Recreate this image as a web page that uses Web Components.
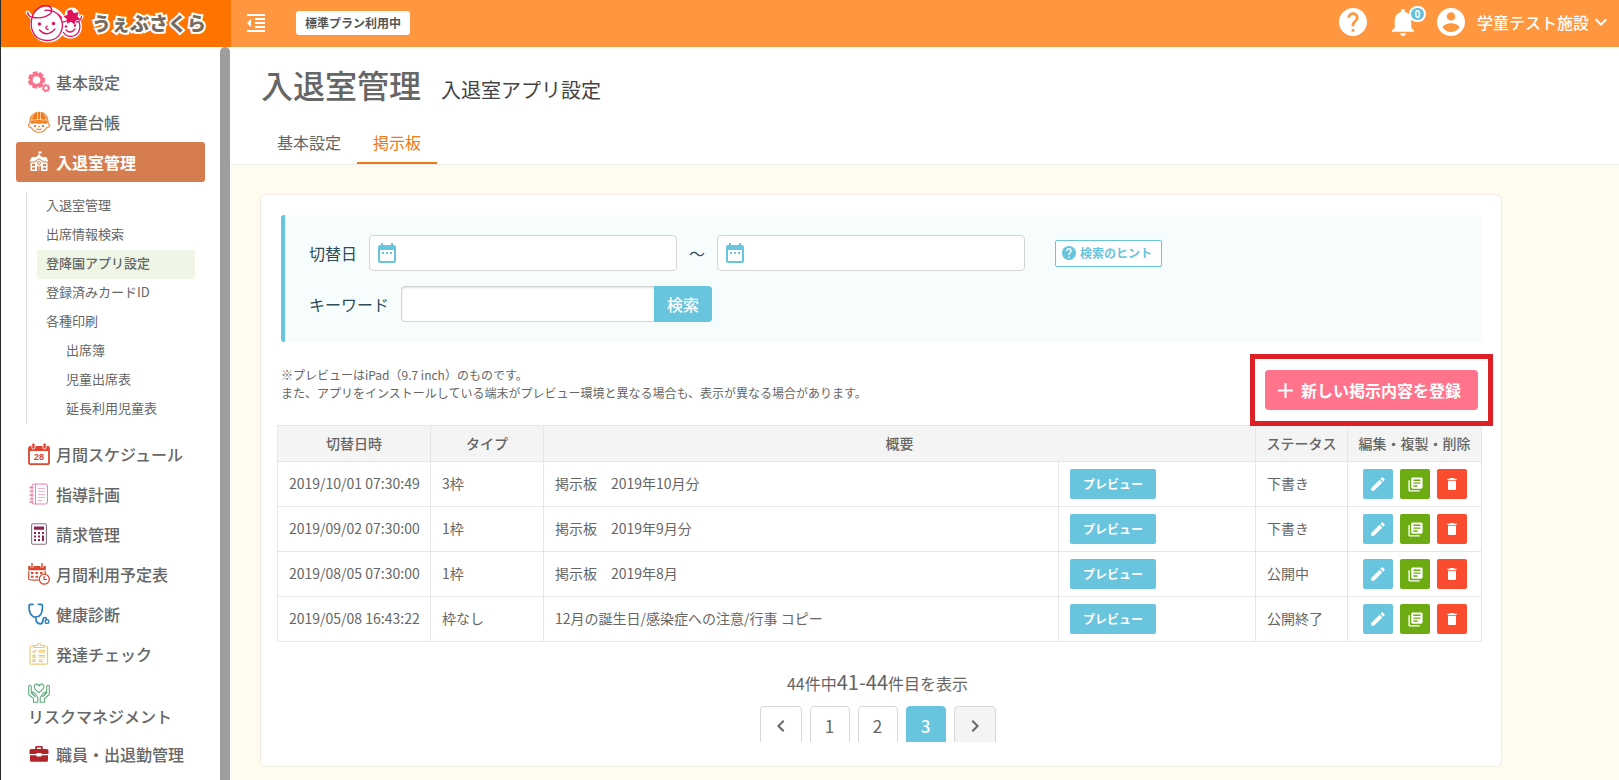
<!DOCTYPE html>
<html lang="ja">
<head>
<meta charset="utf-8">
<title>入退室管理 - うぇぶさくら</title>
<style>
  html, body { margin: 0; height: 100%; }
  body {
    font-family: "Noto Sans CJK JP", "Noto Sans", sans-serif;
    font-size: 14px; color: #666; background: #fffbee; overflow: hidden;
    --blue: #69c4de; --line: #e6e6e6; --orange: #f07818;
  }
</style>
</head>
<body>
<app-shell>
  <app-header slot="header"></app-header>
  <side-nav slot="nav">
    <nav-item icon="gear">基本設定</nav-item>
    <nav-item icon="child">児童台帳</nav-item>
    <nav-item icon="school" active>入退室管理</nav-item>
    <sub-menu>
      <sub-item>入退室管理</sub-item>
      <sub-item>出席情報検索</sub-item>
      <sub-item active>登降園アプリ設定</sub-item>
      <sub-item>登録済みカードID</sub-item>
      <sub-item>各種印刷</sub-item>
      <sub-item nested>出席簿</sub-item>
      <sub-item nested>児童出席表</sub-item>
      <sub-item nested>延長利用児童表</sub-item>
    </sub-menu>
    <nav-item icon="calendar">月間スケジュール</nav-item>
    <nav-item icon="notebook">指導計画</nav-item>
    <nav-item icon="calculator">請求管理</nav-item>
    <nav-item icon="schedule">月間利用予定表</nav-item>
    <nav-item icon="stethoscope">健康診断</nav-item>
    <nav-item icon="checklist">発達チェック</nav-item>
    <nav-item icon="hands" stacked>リスクマネジメント</nav-item>
    <nav-item icon="briefcase">職員・出退勤管理</nav-item>
  </side-nav>
  <page-header></page-header>
  <content-card>
    <search-panel></search-panel>
    <notice-bar></notice-bar>
    <notice-table></notice-table>
    <page-nav></page-nav>
  </content-card>
</app-shell>

<script>
const svg = (box, w, h, body) =>
  `<svg viewBox="${box}" width="${w}" height="${h}" aria-hidden="true">${body}</svg>`;
const glyph = (d, size = 24, box = '0 0 24 24', h = size) =>
  svg(box, size, h, `<path fill="currentColor" d="${d}"/>`);

const HELP = 'M12 2C6.48 2 2 6.48 2 12s4.48 10 10 10 10-4.48 10-10S17.52 2 12 2zm1 17h-2v-2h2v2zm2.07-7.75l-.9.92C13.45 12.9 13 13.5 13 15h-2v-.5c0-1.1.45-2.1 1.17-2.83l1.24-1.26c.37-.36.59-.86.59-1.41 0-1.1-.9-2-2-2s-2 .9-2 2H8c0-2.21 1.79-4 4-4s4 1.79 4 4c0 .88-.36 1.68-.93 2.25z';

const gearPath = (cx, cy, r, r2) => {
  let d = '';
  for (let i = 0; i < 7; i++) {
    [[-.38, r], [-.26, r2], [.26, r2], [.38, r]].forEach(([o, rad], k) => {
      const a = i * 2 * Math.PI / 7 + o - .2;
      d += (i + k ? 'L' : 'M') + (cx + rad * Math.sin(a)).toFixed(2) + ' ' + (cy - rad * Math.cos(a)).toFixed(2);
    });
  }
  return d + 'z';
};

const ICONS = {
  indent: glyph('M11 17h10v-2H11v2zm-8-5l4 4V8l-4 4zm0 9h18v-2H3v2zM3 3v2h18V3H3zm8 6h10V7H11v2zm0 4h10v-2H11v2z', 18, '3 3 18 18'),
  help: glyph(HELP, 28, '2 2 20 20'),
  hint: glyph(HELP, 14, '2 2 20 20'),
  bell: glyph('M12 22c1.1 0 2-.9 2-2h-4c0 1.1.89 2 2 2zm6-6v-5c0-3.07-1.64-5.64-4.5-6.32V4c0-.83-.67-1.5-1.5-1.5s-1.5.67-1.5 1.5v.68C7.63 5.36 6 7.92 6 11v5l-2 2v1h16v-1l-2-2z', 22, '4 2.5 16 19.5', 27),
  account: glyph('M12 2C6.48 2 2 6.48 2 12s4.48 10 10 10 10-4.48 10-10S17.52 2 12 2zm0 3c1.66 0 3 1.34 3 3s-1.34 3-3 3-3-1.34-3-3 1.34-3 3-3zm0 14.2c-2.5 0-4.71-1.28-6-3.22.03-1.99 4-3.08 6-3.08 1.99 0 5.97 1.09 6 3.08-1.29 1.94-3.5 3.22-6 3.22z', 28, '2 2 20 20'),
  down: glyph('M16.59 8.59L12 13.17 7.41 8.59 6 10l6 6 6-6z', 12, '6 6 12 12'),
  date: glyph('M9 11H7v2h2v-2zm4 0h-2v2h2v-2zm4 0h-2v2h2v-2zm2-7h-1V2h-2v2H8V2H6v2H5c-1.11 0-1.99.9-1.99 2L3 20c0 1.1.89 2 2 2h14c1.1 0 2-.9 2-2V6c0-1.1-.9-2-2-2zm0 16H5V9h14v11z'),
  edit: glyph('M3 17.25V21h3.75L17.81 9.94l-3.75-3.75L3 17.25zM20.71 7.04c.39-.39.39-1.02 0-1.41l-2.34-2.34c-.39-.39-1.02-.39-1.41 0l-1.83 1.83 3.75 3.75 1.83-1.83z', 18),
  copy: glyph('M4 6H2v14c0 1.1.9 2 2 2h14v-2H4V6zm16-4H8c-1.1 0-2 .9-2 2v12c0 1.1.9 2 2 2h12c1.1 0 2-.9 2-2V4c0-1.1-.9-2-2-2zm-1 9H9V9h10v2zm-4 4H9v-2h6v2zm4-8H9V5h10v2z', 17),
  trash: glyph('M6 19c0 1.1.9 2 2 2h8c1.1 0 2-.9 2-2V7H6v12zM19 4h-3.5l-1-1h-5l-1 1H5v2h14V4z', 16),
  plus: glyph('M19 13h-6v6h-2v-6H5v-2h6V5h2v6h6v2z', 15, '5 5 14 14'),
  left: glyph('M15.41 7.41L14 6l-6 6 6 6 1.41-1.41L10.83 12z'),
  right: glyph('M10 6L8.59 7.41 13.17 12l-4.58 4.59L10 18l6-6z'),

  gear: svg('0 0 22 22', 22, 22, `<g fill="#f8738c" fill-rule="evenodd">
    <path d="${gearPath(8.5, 9, 7, 8.8)}M8.5 5.2a3.8 3.8 0 1 0 0 7.6a3.8 3.8 0 1 0 0-7.6z"/>
    <path d="${gearPath(18, 17, 3.2, 4.2)}M18 15.2a1.8 1.8 0 1 0 0 3.6a1.8 1.8 0 1 0 0-3.6z"/></g>`),
  child: svg('0 0 22 22', 22, 22, `<g fill="none" stroke="#f0822c" stroke-width="1.1">
    <path d="M2.500 12.500C-.5 13 0 16.500 3 16.300C5 20 8 21.300 11 21.300s6-1.300 8-5C22 16.500 22.500 13 19.500 12.500"/>
    <path d="M8.500 17.800q2.500 1.500 5 0M10 15.500h2"/></g>
    <path fill="#f07d1c" d="M1.500 10.500C1.500 4.500 5.500 1.200 11 .8s9.500 3.700 9.500 9.700l.8 1.500c-3-1-6-1.500-10.300-1.500S3.700 11 .7 12z"/>
    <path fill="none" stroke="#fff" stroke-width=".6" d="M9.500 1v8M12.500 1v8M6 2.500Q3.500 5 3.500 9M16 2.500q2.500 2.500 2.500 6.500M2 9.300q9-1.600 18 0"/>
    <path fill="#f07d1c" d="M3 11q8-1.500 16 0l-.5 2-4-.8q-3.500 1-7 0l-4 .8z"/>
    <circle cx="7" cy="15" r="1" fill="#c0561a"/><circle cx="15" cy="15" r="1" fill="#c0561a"/>`),
  school: svg('0 0 22 22', 22, 22, `<g fill="#fff">
    <path d="M10.500.5h3v2h-2.200V5h-.8z"/><path d="M11 3.800l3.200 2.200h4l2.300 4.500h-4.800L11 7.300l-4.700 3.200H1.500L3.800 6h4z"/>
    <path d="M2.500 11.500h4L11 8.300l4.500 3.200h4V20h-17z"/></g>
    <g fill="#d67d4f"><path d="M4 13h3v2H4zM15 13h3v2h-3zM4 16.500h3v2H4zM15 16.500h3v2h-3zM9 15.200h1.700V20H9zM11.300 15.200H13V20h-1.700z"/><circle cx="11" cy="12" r="1.900"/></g>
    <circle cx="11" cy="12" r="1" fill="#fff"/>`),
  calendar: svg('0 0 22 22', 22, 22, `<rect x="1" y="4" width="20" height="17.200" rx="1.500" fill="#fff" stroke="#dc4632" stroke-width="1.800"/>
    <path fill="#dc4632" d="M1 3.500h20V8H1z"/><g fill="#dc4632" stroke="#fff" stroke-width=".8"><rect x="3.800" y="0" width="3.200" height="6" rx="1.500"/><rect x="15" y="0" width="3.200" height="6" rx="1.500"/></g>
    <text x="11" y="17.300" text-anchor="middle" font-family="Liberation Sans, sans-serif" font-weight="700" font-size="9" fill="#dc4632">28</text>`),
  notebook: svg('0 0 22 22', 22, 22, `<g fill="none" stroke="#ee7fae" stroke-width="1">
    <rect x="4" y="1" width="15.500" height="20" rx="2"/><path d="M7.500 1v20"/><path stroke-width="1.300" d="M1.500 4.500h4M1.500 8.200h4M1.500 12h4M1.500 15.800h4M1.500 19h4"/>
    <path stroke="#f4b4cf" d="M10 5.500h7M10 8.500h7M10 11.500h7M10 14.500h7M10 17.500h4"/></g>`),
  calculator: svg('0 0 22 22', 22, 22, `<rect x="3.600" y=".8" width="14.800" height="20.400" rx="1.500" fill="#fff" stroke="#8c7088" stroke-width="1.100"/>
    <path fill="#8c2353" d="M6 3.500h10v3.300H6zM6 9h2v2H6zM10 9h2v2h-2zM14 9h2v2h-2zM6 12.500h2v2H6zM10 12.500h2v2h-2zM14 12.500h2V18h-2zM6 16h2v2H6zM10 16h2v2h-2z"/>`),
  schedule: svg('0 0 22 22', 22, 22, `<path fill="none" stroke="#d8492f" stroke-width="1.200" d="M.8 8v8.500q3 .8 10 .5M17.200 8v3"/>
    <path fill="#d8492f" d="M.2 3h17.600v4.200H.2zM3 9h2.500v2H3zM7.500 9H10v2H7.500zM12 9h2.500v2H12zM3 12.700h2.500v2H3zM7.500 12.700H10v2H7.500z"/>
    <path stroke="#fff" stroke-width="3" d="M4 0v4.500M14 0v4.500"/><path stroke="#d8492f" stroke-width="1.400" d="M4 0v4.500M14 0v4.500"/>
    <circle cx="16.300" cy="16.200" r="5" fill="#fff" stroke="#d8492f" stroke-width="1.300"/><path fill="none" stroke="#d8492f" stroke-width="1.200" d="M16 13v3.500h3"/>`),
  stethoscope: svg('0 0 22 22', 22, 22, `<g fill="none" stroke="#2b7dbc" stroke-width="1.700" stroke-linecap="round"><path d="M5 1.300H2.700Q1 1.300 1 3.500C1 9 3 14 7.800 14S14.500 9 14.500 3.500q0-2.200-1.700-2.200h-2.300M7.800 14.500c0 4 1.500 6.300 4.500 6.300 4.500 0 1-6.300 4.500-6.300 2 0 1.500 1.500 1.700 2"/><circle cx="19" cy="18.500" r="1.900" stroke-width="1.300"/></g>`),
  checklist: svg('0 0 22 22', 22, 22, `<g fill="none" stroke="#efc878" stroke-width="1.200"><rect x="2" y="3" width="17.500" height="18.200" rx="1.500"/>
    <path fill="#fff" d="M6 4.500V2.500h3Q9.300.7 11 .7t2 1.800h3v2z"/><path d="M4.500 8l1.300 1.500L8 7M10.500 7.500H17M10.500 9.200H17M10.500 12.500H17M10.500 14H17M10.500 17H15M10.500 18.500H15"/>
    <path d="M5 12.300h2v2H5zM5 16.500h2v2H5z"/></g>`),
  hands: svg('0 0 22 22', 22, 22, `<g fill="none" stroke="#64ab7c" stroke-width="1.100" stroke-linejoin="round">
    <path d="M11 10.500C8 8.500 6 6.800 6.200 4.500 6.500 1.500 10 1.400 11 4 12 1.400 15.500 1.500 15.800 4.500 16 6.800 14 8.500 11 10.500z"/>
    <path d="M.7 4v8.500l4.800 4.200v3.600h4.300v-4.800L6.800 11.200 4.500 10l-.3 1.300 3 3.200L3.300 11V4.500Q2 2.500.7 4zM21.300 4v8.500l-4.800 4.200v3.600h-4.300v-4.800l3-4.300 2.300-1.200.3 1.300-3 3.200 3.900-3.500V4.500Q20 2.500 21.300 4z"/></g>`),
  briefcase: svg('0 0 22 22', 22, 22, `<path fill="#b3242a" fill-rule="evenodd" d="M7.200 6V4.200Q7.200 3 8.400 3h5.200q1.200 0 1.200 1.200V6h4q1.700 0 1.700 1.700V11h-7v-1h-5v1h-7V7.700Q1.500 6 3.200 6zM9 6h4V4.600H9z"/>
    <path fill="#b3242a" d="M2 12.300h6.500v1.200h5v-1.200H20v4.900q0 1.600-1.600 1.600H3.600Q2 18.800 2 17.200z"/>`),
};

const define = (tag, template) => {
  customElements.define(tag, class extends HTMLElement {
    constructor() {
      super();
      const root = this.attachShadow({ mode: 'open' });
      root.innerHTML = typeof template === 'function' ? template(this) : template;
    }
  });
};

define('ui-icon', el => `<style>:host{display:inline-flex;flex:none}svg{display:block}</style>${ICONS[el.getAttribute('name')]}`);

define('app-shell', `<style>
  :host { display: grid; grid-template: auto 1fr / 230px 1fr; height: 100vh; box-sizing: border-box; border-left: 1px solid #2b2b2b; }
  header { grid-column: 1 / -1; }
  main { min-width: 0; overflow: hidden; }
  ::slotted(side-nav) { min-height: 0; overflow: hidden; }
</style>
<header><slot name="header"></slot></header><slot name="nav"></slot><main><slot></slot></main>`);

define('brand-logo', `<style>
  :host { display: block; }
  a { display: flex; align-items: center; text-decoration: none; gap: 7px; }
  .name { font-size: 19px; line-height: 30px; padding-bottom: 2px; font-weight: 900; color: #776b60; -webkit-text-stroke: 4px #fff; paint-order: stroke fill; white-space: nowrap; }
  svg { display: block; }
</style>
<a href="#" aria-label="うぇぶさくら">
  <svg viewBox="0 0 60 44" width="60" height="44" aria-hidden="true">
    <g fill="#fff" stroke="#fff" stroke-width="4" stroke-linejoin="round" stroke-linecap="round">
      <circle cx="23" cy="22.500" r="16"/><circle cx="45.500" cy="25" r="9.500"/><circle cx="47" cy="13" r="5.500"/>
      <path stroke-width="4" d="M2.500 10.500l5 6M56.500 14.500l-4 7"/>
    </g>
    <g fill="none" stroke="#e0105c" stroke-width="1.300" stroke-linecap="round" stroke-linejoin="round">
      <path d="M2.500 10.500Q4 15.500 8.500 15.500C16 16.500 21 15 25 12c4-3.500 1-8.500-4-8.500C15 3.500 9 8 7 15.500 4.500 25 8 34 15 37c7 3 16 1.500 20-5 4-7 3-15-3-20.500Q28.500 8.500 25 9M20 8.500Q28 6.500 36.500 15.500"/>
      <path d="M37.500 20q4 0 6-3M56.500 14.500q-.5 5-5 5.500M38.500 30.500C42 36 50 35.500 53.500 30q2.500-5 .5-10"/>
      <path d="M14.500 28q7 8 15.500-1M22 24q-3 2.500 1 3.500M41 28q4.500 4.500 9-1"/>
    </g>
    <g fill="#e0105c"><circle cx="14.500" cy="22" r="1.700"/><circle cx="28.500" cy="21.500" r="1.700"/><circle cx="41" cy="24.500" r="1.200"/><circle cx="50" cy="23.500" r="1.200"/>
      <path d="M46.500 7.500l2.500 3.700 4.700-1.200-1.200 4.500 3 3-4.700 1-1.300 4-3.500-2.700-4 2 .2-4.500-3.700-2.800 4-1.700-.2-4z"/></g>
  </svg>
  <span class="name">うぇぶさくら</span>
</a>`);

define('app-header', `<style>
  :host { display: flex; height: 47px; background: #ff9640; color: #fff; }
  .brand { width: 230px; box-sizing: border-box; background: #ff7300; padding-left: 24px; display: flex; align-items: center; overflow: hidden; }
  .bar { flex: 1; display: flex; align-items: center; padding: 0 12px 0 16px; }
  button { border: 0; background: none; padding: 0; color: inherit; font: inherit; display: flex; align-items: center; cursor: pointer; }
  .bar > button, .plan { margin-bottom: 2px; }
  .plan { margin-left: 31px; background: #fff; color: #555; border-radius: 3px; font-size: 12px; line-height: 24px; font-weight: 700; padding: 0 9px; }
  .tools { margin-left: auto; display: flex; align-items: center; height: 44px; margin-bottom: 3px; }
  .bell { position: relative; margin: 0 23px 0 25px; }
  .count { position: absolute; left: 17px; top: -3px; min-width: 13px; height: 12px; border: 2px solid #fff; border-radius: 8px; background: #64bfdc; font-size: 10px; line-height: 12px; font-weight: 700; text-align: center; }
  .user { font-size: 16px; line-height: 24px; margin: 0 6px 0 12px; font-weight: 500; }
</style>
<div class="brand"><brand-logo></brand-logo></div>
<div class="bar">
  <button type="button" aria-label="メニューを閉じる"><ui-icon name="indent"></ui-icon></button>
  <span class="plan">標準プラン利用中</span>
  <div class="tools">
    <button type="button" aria-label="ヘルプ"><ui-icon name="help"></ui-icon></button>
    <button type="button" class="bell" aria-label="お知らせ"><ui-icon name="bell"></ui-icon><span class="count">0</span></button>
    <button type="button"><ui-icon name="account"></ui-icon><span class="user">学童テスト施設</span><ui-icon name="down"></ui-icon></button>
  </div>
</div>`);

define('side-nav', `<style>
  :host { display: flex; background: #fff; }
  nav { flex: 1; padding: 15px 15px 0; min-width: 0; }
  .thumb { width: 10px; background: #9e9e9e; border-radius: 5px 5px 0 0; margin-right: 1px; }
</style>
<nav aria-label="メイン"><slot></slot></nav><div class="thumb"></div>`);

define('nav-item', el => `<style>
  :host { display: block; }
  a { display: flex; align-items: center; gap: 6px; min-height: 40px; padding: 0 12px; border-radius: 3px; color: #666; text-decoration: none; font-size: 16px; line-height: 24px; font-weight: 500; white-space: nowrap; }
  :host([active]) a { background: #d67d4f; color: #fff; font-weight: 700; }
  :host([stacked]) a { flex-direction: column; align-items: flex-start; gap: 0; padding-top: 8px; min-height: 52px; }
</style>
<a href="#"><ui-icon name="${el.getAttribute('icon')}"></ui-icon><span><slot></slot></span></a>`);

define('sub-menu', `<style>
  :host { display: block; margin: 10px 10px; border-left: 1px solid #ddd; padding-left: 10px; }
</style><slot></slot>`);

define('sub-item', `<style>
  :host { display: block; }
  a { display: block; padding: 0 0 4px 9px; color: #666; text-decoration: none; font-size: 13px; line-height: 25px; white-space: nowrap; }
  :host([nested]) a { padding-left: 29px; }
  :host([active]) a { background: #eff6e6; font-weight: 500; }
</style><a href="#"><slot></slot></a>`);

define('page-header', `<style>
  :host { display: block; background: #fff; border-bottom: 1px solid #eee; padding: 13px 30px 0; }
  .titles { display: flex; align-items: baseline; gap: 20px; }
  h1 { margin: 0; font-size: 32px; line-height: 48px; font-weight: 500; }
  p { margin: 0; font-size: 20px; line-height: 32px; color: #444; }
  nav { display: flex; margin-top: 14px; }
  a { padding: 0 16px; font-size: 16px; line-height: 40px; color: inherit; text-decoration: none; border-bottom: 2px solid transparent; }
  a[aria-current] { color: var(--orange); border-color: var(--orange); }
</style>
<div class="titles"><h1>入退室管理</h1><p>入退室アプリ設定</p></div>
<nav aria-label="タブ"><a href="#">基本設定</a><a href="#" aria-current="page">掲示板</a></nav>`);

define('content-card', `<style>
  :host { display: block; max-width: 1242px; box-sizing: border-box; margin: 29px 30px 0 29px; padding: 20px 19px 24px 16px; background: #fff; border: 1px solid #efebe2; border-radius: 6px; }
</style><slot></slot>`);

define('search-panel', `<style>
  :host { display: block; margin-left: 4px; }
  form { border-left: 4px solid var(--blue); border-radius: 3px; background: #f7fdfd; padding: 20px 24px; display: grid; gap: 15px; color: #2f4a57; font-size: 16px; }
  .row { display: flex; align-items: center; }
  label { line-height: 36px; margin-right: 12px; }
  .date { position: relative; flex: 0 1 308px; color: var(--blue); }
  .date ui-icon { position: absolute; left: 6px; top: 6px; }
  input { box-sizing: border-box; height: 36px; border: 1px solid #d5d5d5; border-radius: 4px; background: #fff; font: inherit; color: #666; padding: 0 12px; width: 100%; display: block; }
  .date input { padding-left: 36px; }
  .tilde { width: 40px; text-align: center; }
  .hint { margin-left: 30px; height: 27px; padding: 0 9px 0 6px; display: flex; align-items: center; gap: 4px; border: 1px solid var(--blue); border-radius: 2px; background: #fff; color: var(--blue); font: 700 12px/20px "Noto Sans CJK JP", sans-serif; }
  .keyword { display: flex; }
  .keyword input { width: 253px; border-right: 0; border-radius: 4px 0 0 4px; box-shadow: inset 0 1px 2px #ddd; }
  .go { border: 0; width: 58px; padding: 0; height: 36px; border-radius: 0 4px 4px 0; background: var(--blue); color: #fff; font: 500 16px/24px "Noto Sans CJK JP", sans-serif; }
</style>
<form>
  <div class="row">
    <label for="from">切替日</label>
    <div class="date"><input id="from" type="text"><ui-icon name="date"></ui-icon></div>
    <span class="tilde">～</span>
    <div class="date"><input id="to" type="text" aria-label="切替日（終了）"><ui-icon name="date"></ui-icon></div>
    <button type="button" class="hint"><ui-icon name="hint"></ui-icon>検索のヒント</button>
  </div>
  <div class="row">
    <label for="kw">キーワード</label>
    <div class="keyword"><input id="kw" type="text"><button type="button" class="go">検索</button></div>
  </div>
</form>`);

define('notice-bar', `<style>
  :host { display: flex; justify-content: space-between; align-items: center; margin: 28px 4px 15px; height: 40px; }
  p { margin: 0; font-size: 12px; line-height: 18px; padding-bottom: 12px; }
  .spot { position: relative; }
  .spot::after { content: ""; position: absolute; inset: -16px -15px; border: 5px solid #dd1f26; pointer-events: none; }
  button { display: flex; align-items: center; gap: 8px; height: 40px; padding: 0 17px 0 13px; border: 0; border-radius: 4px; background: #ff748c; color: #fff; font: 700 16px/24px "Noto Sans CJK JP", sans-serif; white-space: nowrap; }
</style>
<p>※プレビューはiPad（9.7 inch）のものです。<br>また、アプリをインストールしている端末がプレビュー環境と異なる場合も、表示が異なる場合があります。</p>
<div class="spot"><button type="button"><ui-icon name="plus"></ui-icon>新しい掲示内容を登録</button></div>`);

const NOTICES = [
  ['2019/10/01 07:30:49', '3枠', '掲示板　2019年10月分', '下書き'],
  ['2019/09/02 07:30:00', '1枠', '掲示板　2019年9月分', '下書き'],
  ['2019/08/05 07:30:00', '1枠', '掲示板　2019年8月', '公開中'],
  ['2019/05/08 16:43:22', '枠なし', '12月の誕生日/感染症への注意/行事 コピー', '公開終了'],
];

define('notice-table', `<style>
  :host { display: block; }
  table { width: 100%; border-collapse: collapse; table-layout: fixed; font-size: 14px; line-height: 20px; }
  th, td { border: 1px solid var(--line); padding: 0 11px 2px; text-align: left; white-space: nowrap; }
  th { background: #f4f4f4; font-weight: 500; text-align: center; padding: 0 0 2px; }
  thead tr { height: 36px; }
  tbody tr { height: 45px; }
  td:has(button) { padding-bottom: 0; }
  .date { width: 153px; } .type { width: 113px; } .preview { width: 197px; } .status { width: 92px; } .ops { width: 134px; }
  button { border: 0; padding: 0; height: 30px; border-radius: 2px; color: #fff; background: var(--blue); font: 700 12px/20px "Noto Sans CJK JP", sans-serif; }
  .pv { width: 86px; display: block; }
  .acts { display: flex; gap: 7px; padding-left: 4px; }
  .acts button { width: 30px; display: flex; align-items: center; justify-content: center; }
  .acts .copy { background: #6cab12; } .acts .del { background: #fb4c2f; }
</style>
<table>
  <colgroup><col class="date"><col class="type"><col><col class="preview"><col class="status"><col class="ops"></colgroup>
  <thead><tr><th scope="col">切替日時</th><th scope="col">タイプ</th><th scope="col" colspan="2">概要</th><th scope="col">ステータス</th><th scope="col">編集・複製・削除</th></tr></thead>
  <tbody>${NOTICES.map(([date, type, title, status]) => `
    <tr><td>${date}</td><td>${type}</td><td>${title}</td>
      <td><button type="button" class="pv">プレビュー</button></td><td>${status}</td>
      <td><div class="acts">
        <button type="button" aria-label="編集"><ui-icon name="edit"></ui-icon></button>
        <button type="button" class="copy" aria-label="複製"><ui-icon name="copy"></ui-icon></button>
        <button type="button" class="del" aria-label="削除"><ui-icon name="trash"></ui-icon></button>
      </div></td></tr>`).join('')}
  </tbody>
</table>`);

define('page-nav', `<style>
  :host { display: block; margin: 24px 4px 0 0; }
  p { margin: 0; text-align: center; font-size: 16px; line-height: 32px; }
  strong { font-size: 20px; font-weight: 400; }
  nav { display: flex; justify-content: center; gap: 8px; margin-top: 7px; height: 36px; overflow: hidden; }
  a { box-sizing: border-box; width: 40px; height: 42px; border: 1px solid #d8d8d8; border-radius: 4px; display: flex; align-items: center; justify-content: center; padding-bottom: 3px; color: #666; text-decoration: none; font-size: 17px; background: #fff; }
  .step { width: 42px; }
  .next { background: #f4f4f4; }
  a[aria-current] { background: var(--blue); border-color: var(--blue); color: #fff; font-weight: 500; }
</style>
<p>44件中<strong>41-44</strong>件目を表示</p>
<nav aria-label="ページ">
  <a href="#" class="step" aria-label="前へ"><ui-icon name="left"></ui-icon></a>
  <a href="#">1</a><a href="#">2</a><a href="#" aria-current="page">3</a>
  <a href="#" class="step next" aria-label="次へ"><ui-icon name="right"></ui-icon></a>
</nav>`);
</script>
</body>
</html>
